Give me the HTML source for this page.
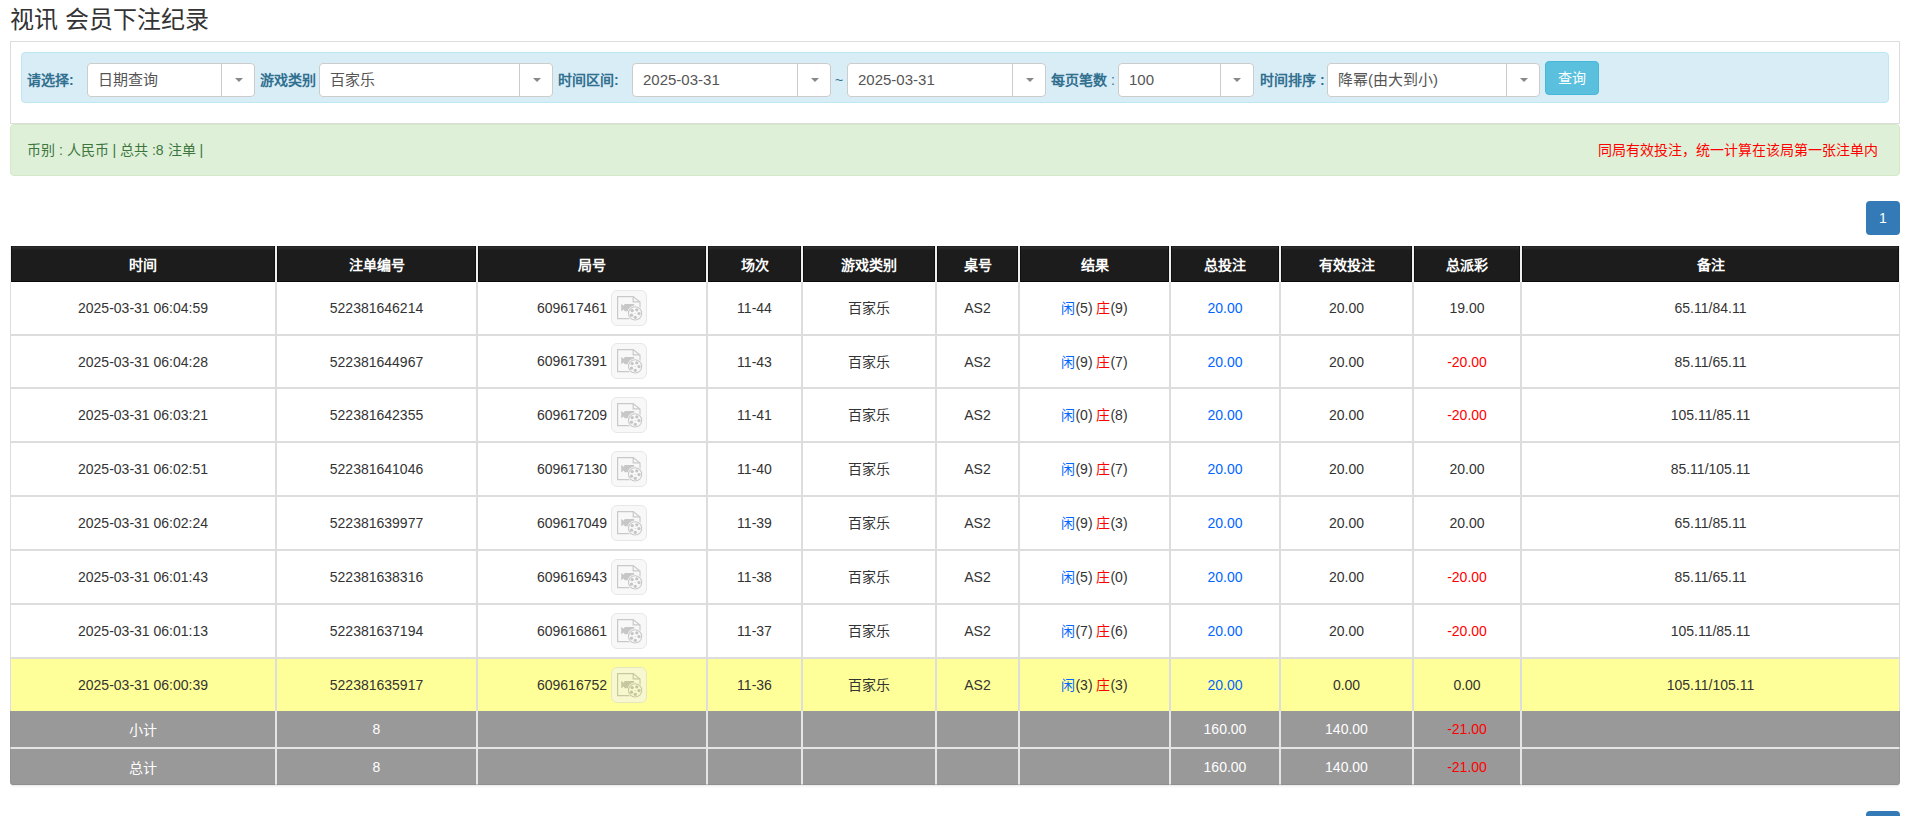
<!DOCTYPE html>
<html lang="zh-CN"><head><meta charset="utf-8">
<style>
*{box-sizing:border-box}
html,body{margin:0;padding:0;background:#fff}
body{font-family:"Liberation Sans",sans-serif;font-size:14px;color:#333;width:1914px;height:816px;overflow:hidden;position:relative}
.abs{position:absolute}
.title{left:10px;top:1px;font-size:24px;line-height:38px;color:#333;white-space:nowrap}
.well{left:10px;top:41px;width:1890px;height:83px;border:1px solid #ddd;background:#fff}
.info{left:21px;top:52px;width:1868px;height:51px;background:#d9edf7;border:1px solid #bce8f1;border-radius:4px}
.lbl{top:63px;height:34px;line-height:34px;font-weight:bold;color:#31708f;white-space:nowrap}
.sel{top:63px;height:34px;background:#fff;border:1px solid #ccc;border-radius:4px;color:#555;line-height:32px;padding-left:10px;font-size:15px;white-space:nowrap}
.sel .div{position:absolute;top:0;bottom:0;width:1px;background:#ccc}
.sel .arr{position:absolute;top:14px;width:0;height:0;border-left:4px solid transparent;border-right:4px solid transparent;border-top:4px solid #888}
.btn{left:1545px;top:61px;width:54px;height:34px;background:#5bc0de;border:1px solid #46b8da;border-radius:4px;color:#fff;text-align:center;line-height:32px;font-size:14px}
.alert{left:10px;top:124px;width:1890px;height:52px;background:#dff0d8;border:1px solid #d6e9c6;border-radius:4px;color:#3c763d;line-height:50px}
.alert .l{position:absolute;left:16px;top:0}
.alert .r{position:absolute;right:21px;top:0;color:#f00}
.page{left:1866px;width:34px;height:34px;background:#337ab7;border-radius:4px;color:#fff;text-align:center;line-height:34px;font-size:14px}
table.t{position:absolute;left:10px;top:246px;width:1890px;border-collapse:separate;border-spacing:0;table-layout:fixed}
.t th{background:#1c1c1c linear-gradient(#1c1c1c,#1c1c1c);color:#fff;font-weight:bold;height:36px;padding:0;border-left:1px solid #f0f0f0;border-right:1px solid #f0f0f0;text-align:center;vertical-align:middle;box-shadow:inset 1px 0 0 #111,inset -1px 0 0 #111,inset 0 -1px 0 #090909,inset 0 1px 0 #222,inset 0 2px 0 #2c2c2c,inset 0 3px 0 #272727,inset 0 4px 0 #222}
.t td{border-left:1px solid #ddd;border-right:1px solid #ddd;border-bottom:1px solid #ddd;border-top:1px solid #ddd;text-align:center;vertical-align:middle;padding:0;white-space:nowrap}
.t tr.r1 td{border-top:none}
.t tr.y td{background:#ffff99;border-bottom:none}
.t tr.g td{background:#999;color:#fff;border-color:#e5e5e5}
.t tr.g1 td{border-top:none}
.t tr.g td:first-child{border-left-color:#929292}
.t tr.g td:last-child{border-right-color:#929292}
.t tr.g2 td{border-bottom-color:#8f8f8f}
.t tr.g2 td:first-child{border-bottom-left-radius:3px}
.t tr.g2 td:last-child{border-bottom-right-radius:3px}
.shd{left:11px;top:785px;width:1888px;height:3px;background:linear-gradient(rgba(0,0,0,.09),rgba(0,0,0,.03),rgba(0,0,0,0));border-radius:0 0 3px 3px}

.b{color:#0066ff}
.dn{position:relative;top:-1px}
.rd,.t tr.g td.rd{color:#f00}
.ico{display:inline-block;vertical-align:middle;width:36px;height:36px;border:1px solid #d8d8d8;border-radius:6px;background:#f5f5f5;opacity:.6;margin-left:4px;position:relative}
.ico svg{position:absolute;left:-1px;top:-1px}
</style></head><body>
<div class="abs title">视讯 会员下注纪录</div>
<div class="abs well"></div>
<div class="abs info"></div>

<div class="abs lbl" style="left:27px">请选择:</div>
<div class="abs sel" style="left:87px;width:168px">日期查询<span class="div" style="left:133px"></span><span class="arr" style="left:146.5px"></span></div>
<div class="abs lbl" style="left:260px">游戏类别</div>
<div class="abs sel" style="left:319px;width:234px">百家乐<span class="div" style="left:199px"></span><span class="arr" style="left:212.5px"></span></div>
<div class="abs lbl" style="left:558px">时间区间:</div>
<div class="abs sel" style="left:632px;width:199px">2025-03-31<span class="div" style="left:164px"></span><span class="arr" style="left:177.5px"></span></div>
<div class="abs lbl" style="left:835px;font-weight:normal">~</div>
<div class="abs sel" style="left:847px;width:199px">2025-03-31<span class="div" style="left:164px"></span><span class="arr" style="left:177.5px"></span></div>
<div class="abs lbl" style="left:1051px">每页笔数 <span style="font-weight:normal">:</span></div>
<div class="abs sel" style="left:1118px;width:136px">100<span class="div" style="left:101px"></span><span class="arr" style="left:114px"></span></div>
<div class="abs lbl" style="left:1260px">时间排序 :</div>
<div class="abs sel" style="left:1327px;width:213px">降幂(由大到小)<span class="div" style="left:178px"></span><span class="arr" style="left:192px"></span></div>
<div class="abs btn">查询</div>

<div class="abs alert"><span class="l">币别 : 人民币 | 总共 :8 注单 |</span><span class="r">同局有效投注，统一计算在该局第一张注单内</span></div>

<div class="abs page" style="top:201px">1</div>

<table class="t"><colgroup><col style="width:266px"><col style="width:201px"><col style="width:230px"><col style="width:95px"><col style="width:134px"><col style="width:83px"><col style="width:151px"><col style="width:110px"><col style="width:133px"><col style="width:108px"><col style="width:379px"></colgroup>
<thead><tr><th>时间</th><th>注单编号</th><th>局号</th><th>场次</th><th>游戏类别</th><th>桌号</th><th>结果</th><th>总投注</th><th>有效投注</th><th>总派彩</th><th>备注</th></tr></thead><tbody>
<tr class="r1" style="height:53px"><td>2025-03-31 06:04:59</td><td>522381646214</td><td><span style="position:relative;top:1px">609617461</span><span class="ico"><svg width="36" height="36" viewBox="0 0 36 36"><g fill="none" stroke="#a6a6a6" stroke-width="1.2"><path d="M6.6 6.6H22.2L29 12V28.6H6.6Z"/><path d="M22.2 6.6V11.9H29"/></g><path fill="#a3a3a3" d="M10.2 14L12.9 15.7L13.6 14H23.2V21.2H13.6L12.9 19.5L10.2 21.2Z"/><circle cx="24.1" cy="23.4" r="7.9" fill="#f5f5f5"/><circle cx="24.1" cy="23.4" r="6.6" fill="#f5f5f5" stroke="#a6a6a6" stroke-width="1.1"/><g fill="#a0a0a0"><circle cx="21.2" cy="20.6" r="1.65"/><circle cx="25.8" cy="19.8" r="1.65"/><circle cx="28" cy="23.6" r="1.65"/><circle cx="24.3" cy="27.3" r="1.65"/><circle cx="20.5" cy="25.2" r="1.65"/><circle cx="24.1" cy="23.4" r="0.5"/></g></svg></span></td><td>11-44</td><td><span class="dn">百家乐</span></td><td>AS2</td><td><span class="dn"><span class="b">闲</span>(5) <span class="rd">庄</span>(9)</span></td><td class="b">20.00</td><td>20.00</td><td>19.00</td><td>65.11/84.11</td></tr>
<tr style="height:53px"><td>2025-03-31 06:04:28</td><td>522381644967</td><td><span style="position:relative;top:1px">609617391</span><span class="ico" style="top:-1px"><svg width="36" height="36" viewBox="0 0 36 36"><g fill="none" stroke="#a6a6a6" stroke-width="1.2"><path d="M6.6 6.6H22.2L29 12V28.6H6.6Z"/><path d="M22.2 6.6V11.9H29"/></g><path fill="#a3a3a3" d="M10.2 14L12.9 15.7L13.6 14H23.2V21.2H13.6L12.9 19.5L10.2 21.2Z"/><circle cx="24.1" cy="23.4" r="7.9" fill="#f5f5f5"/><circle cx="24.1" cy="23.4" r="6.6" fill="#f5f5f5" stroke="#a6a6a6" stroke-width="1.1"/><g fill="#a0a0a0"><circle cx="21.2" cy="20.6" r="1.65"/><circle cx="25.8" cy="19.8" r="1.65"/><circle cx="28" cy="23.6" r="1.65"/><circle cx="24.3" cy="27.3" r="1.65"/><circle cx="20.5" cy="25.2" r="1.65"/><circle cx="24.1" cy="23.4" r="0.5"/></g></svg></span></td><td>11-43</td><td><span class="dn">百家乐</span></td><td>AS2</td><td><span class="dn"><span class="b">闲</span>(9) <span class="rd">庄</span>(7)</span></td><td class="b">20.00</td><td>20.00</td><td><span class="rd">-20.00</span></td><td>85.11/65.11</td></tr>
<tr style="height:54px"><td>2025-03-31 06:03:21</td><td>522381642355</td><td><span style="position:relative;top:1px">609617209</span><span class="ico"><svg width="36" height="36" viewBox="0 0 36 36"><g fill="none" stroke="#a6a6a6" stroke-width="1.2"><path d="M6.6 6.6H22.2L29 12V28.6H6.6Z"/><path d="M22.2 6.6V11.9H29"/></g><path fill="#a3a3a3" d="M10.2 14L12.9 15.7L13.6 14H23.2V21.2H13.6L12.9 19.5L10.2 21.2Z"/><circle cx="24.1" cy="23.4" r="7.9" fill="#f5f5f5"/><circle cx="24.1" cy="23.4" r="6.6" fill="#f5f5f5" stroke="#a6a6a6" stroke-width="1.1"/><g fill="#a0a0a0"><circle cx="21.2" cy="20.6" r="1.65"/><circle cx="25.8" cy="19.8" r="1.65"/><circle cx="28" cy="23.6" r="1.65"/><circle cx="24.3" cy="27.3" r="1.65"/><circle cx="20.5" cy="25.2" r="1.65"/><circle cx="24.1" cy="23.4" r="0.5"/></g></svg></span></td><td>11-41</td><td><span class="dn">百家乐</span></td><td>AS2</td><td><span class="dn"><span class="b">闲</span>(0) <span class="rd">庄</span>(8)</span></td><td class="b">20.00</td><td>20.00</td><td><span class="rd">-20.00</span></td><td>105.11/85.11</td></tr>
<tr style="height:54px"><td>2025-03-31 06:02:51</td><td>522381641046</td><td><span style="position:relative;top:1px">609617130</span><span class="ico"><svg width="36" height="36" viewBox="0 0 36 36"><g fill="none" stroke="#a6a6a6" stroke-width="1.2"><path d="M6.6 6.6H22.2L29 12V28.6H6.6Z"/><path d="M22.2 6.6V11.9H29"/></g><path fill="#a3a3a3" d="M10.2 14L12.9 15.7L13.6 14H23.2V21.2H13.6L12.9 19.5L10.2 21.2Z"/><circle cx="24.1" cy="23.4" r="7.9" fill="#f5f5f5"/><circle cx="24.1" cy="23.4" r="6.6" fill="#f5f5f5" stroke="#a6a6a6" stroke-width="1.1"/><g fill="#a0a0a0"><circle cx="21.2" cy="20.6" r="1.65"/><circle cx="25.8" cy="19.8" r="1.65"/><circle cx="28" cy="23.6" r="1.65"/><circle cx="24.3" cy="27.3" r="1.65"/><circle cx="20.5" cy="25.2" r="1.65"/><circle cx="24.1" cy="23.4" r="0.5"/></g></svg></span></td><td>11-40</td><td><span class="dn">百家乐</span></td><td>AS2</td><td><span class="dn"><span class="b">闲</span>(9) <span class="rd">庄</span>(7)</span></td><td class="b">20.00</td><td>20.00</td><td>20.00</td><td>85.11/105.11</td></tr>
<tr style="height:54px"><td>2025-03-31 06:02:24</td><td>522381639977</td><td><span style="position:relative;top:1px">609617049</span><span class="ico"><svg width="36" height="36" viewBox="0 0 36 36"><g fill="none" stroke="#a6a6a6" stroke-width="1.2"><path d="M6.6 6.6H22.2L29 12V28.6H6.6Z"/><path d="M22.2 6.6V11.9H29"/></g><path fill="#a3a3a3" d="M10.2 14L12.9 15.7L13.6 14H23.2V21.2H13.6L12.9 19.5L10.2 21.2Z"/><circle cx="24.1" cy="23.4" r="7.9" fill="#f5f5f5"/><circle cx="24.1" cy="23.4" r="6.6" fill="#f5f5f5" stroke="#a6a6a6" stroke-width="1.1"/><g fill="#a0a0a0"><circle cx="21.2" cy="20.6" r="1.65"/><circle cx="25.8" cy="19.8" r="1.65"/><circle cx="28" cy="23.6" r="1.65"/><circle cx="24.3" cy="27.3" r="1.65"/><circle cx="20.5" cy="25.2" r="1.65"/><circle cx="24.1" cy="23.4" r="0.5"/></g></svg></span></td><td>11-39</td><td><span class="dn">百家乐</span></td><td>AS2</td><td><span class="dn"><span class="b">闲</span>(9) <span class="rd">庄</span>(3)</span></td><td class="b">20.00</td><td>20.00</td><td>20.00</td><td>65.11/85.11</td></tr>
<tr style="height:54px"><td>2025-03-31 06:01:43</td><td>522381638316</td><td><span style="position:relative;top:1px">609616943</span><span class="ico"><svg width="36" height="36" viewBox="0 0 36 36"><g fill="none" stroke="#a6a6a6" stroke-width="1.2"><path d="M6.6 6.6H22.2L29 12V28.6H6.6Z"/><path d="M22.2 6.6V11.9H29"/></g><path fill="#a3a3a3" d="M10.2 14L12.9 15.7L13.6 14H23.2V21.2H13.6L12.9 19.5L10.2 21.2Z"/><circle cx="24.1" cy="23.4" r="7.9" fill="#f5f5f5"/><circle cx="24.1" cy="23.4" r="6.6" fill="#f5f5f5" stroke="#a6a6a6" stroke-width="1.1"/><g fill="#a0a0a0"><circle cx="21.2" cy="20.6" r="1.65"/><circle cx="25.8" cy="19.8" r="1.65"/><circle cx="28" cy="23.6" r="1.65"/><circle cx="24.3" cy="27.3" r="1.65"/><circle cx="20.5" cy="25.2" r="1.65"/><circle cx="24.1" cy="23.4" r="0.5"/></g></svg></span></td><td>11-38</td><td><span class="dn">百家乐</span></td><td>AS2</td><td><span class="dn"><span class="b">闲</span>(5) <span class="rd">庄</span>(0)</span></td><td class="b">20.00</td><td>20.00</td><td><span class="rd">-20.00</span></td><td>85.11/65.11</td></tr>
<tr style="height:54px"><td>2025-03-31 06:01:13</td><td>522381637194</td><td><span style="position:relative;top:1px">609616861</span><span class="ico"><svg width="36" height="36" viewBox="0 0 36 36"><g fill="none" stroke="#a6a6a6" stroke-width="1.2"><path d="M6.6 6.6H22.2L29 12V28.6H6.6Z"/><path d="M22.2 6.6V11.9H29"/></g><path fill="#a3a3a3" d="M10.2 14L12.9 15.7L13.6 14H23.2V21.2H13.6L12.9 19.5L10.2 21.2Z"/><circle cx="24.1" cy="23.4" r="7.9" fill="#f5f5f5"/><circle cx="24.1" cy="23.4" r="6.6" fill="#f5f5f5" stroke="#a6a6a6" stroke-width="1.1"/><g fill="#a0a0a0"><circle cx="21.2" cy="20.6" r="1.65"/><circle cx="25.8" cy="19.8" r="1.65"/><circle cx="28" cy="23.6" r="1.65"/><circle cx="24.3" cy="27.3" r="1.65"/><circle cx="20.5" cy="25.2" r="1.65"/><circle cx="24.1" cy="23.4" r="0.5"/></g></svg></span></td><td>11-37</td><td><span class="dn">百家乐</span></td><td>AS2</td><td><span class="dn"><span class="b">闲</span>(7) <span class="rd">庄</span>(6)</span></td><td class="b">20.00</td><td>20.00</td><td><span class="rd">-20.00</span></td><td>105.11/85.11</td></tr>
<tr class="y" style="height:53px"><td>2025-03-31 06:00:39</td><td>522381635917</td><td><span style="position:relative;top:1px">609616752</span><span class="ico"><svg width="36" height="36" viewBox="0 0 36 36"><g fill="none" stroke="#a6a6a6" stroke-width="1.2"><path d="M6.6 6.6H22.2L29 12V28.6H6.6Z"/><path d="M22.2 6.6V11.9H29"/></g><path fill="#a3a3a3" d="M10.2 14L12.9 15.7L13.6 14H23.2V21.2H13.6L12.9 19.5L10.2 21.2Z"/><circle cx="24.1" cy="23.4" r="7.9" fill="#f5f5f5"/><circle cx="24.1" cy="23.4" r="6.6" fill="#f5f5f5" stroke="#a6a6a6" stroke-width="1.1"/><g fill="#a0a0a0"><circle cx="21.2" cy="20.6" r="1.65"/><circle cx="25.8" cy="19.8" r="1.65"/><circle cx="28" cy="23.6" r="1.65"/><circle cx="24.3" cy="27.3" r="1.65"/><circle cx="20.5" cy="25.2" r="1.65"/><circle cx="24.1" cy="23.4" r="0.5"/></g></svg></span></td><td>11-36</td><td><span class="dn">百家乐</span></td><td>AS2</td><td><span class="dn"><span class="b">闲</span>(3) <span class="rd">庄</span>(3)</span></td><td class="b">20.00</td><td>0.00</td><td>0.00</td><td>105.11/105.11</td></tr>
<tr class="g g1" style="height:37px"><td>小计</td><td>8</td><td></td><td></td><td></td><td></td><td></td><td>160.00</td><td>140.00</td><td class="rd">-21.00</td><td></td></tr>
<tr class="g g2" style="height:37px"><td>总计</td><td>8</td><td></td><td></td><td></td><td></td><td></td><td>160.00</td><td>140.00</td><td class="rd">-21.00</td><td></td></tr>
</tbody></table>

<div class="abs shd"></div>
<div class="abs page" style="top:811px">1</div>
</body></html>
